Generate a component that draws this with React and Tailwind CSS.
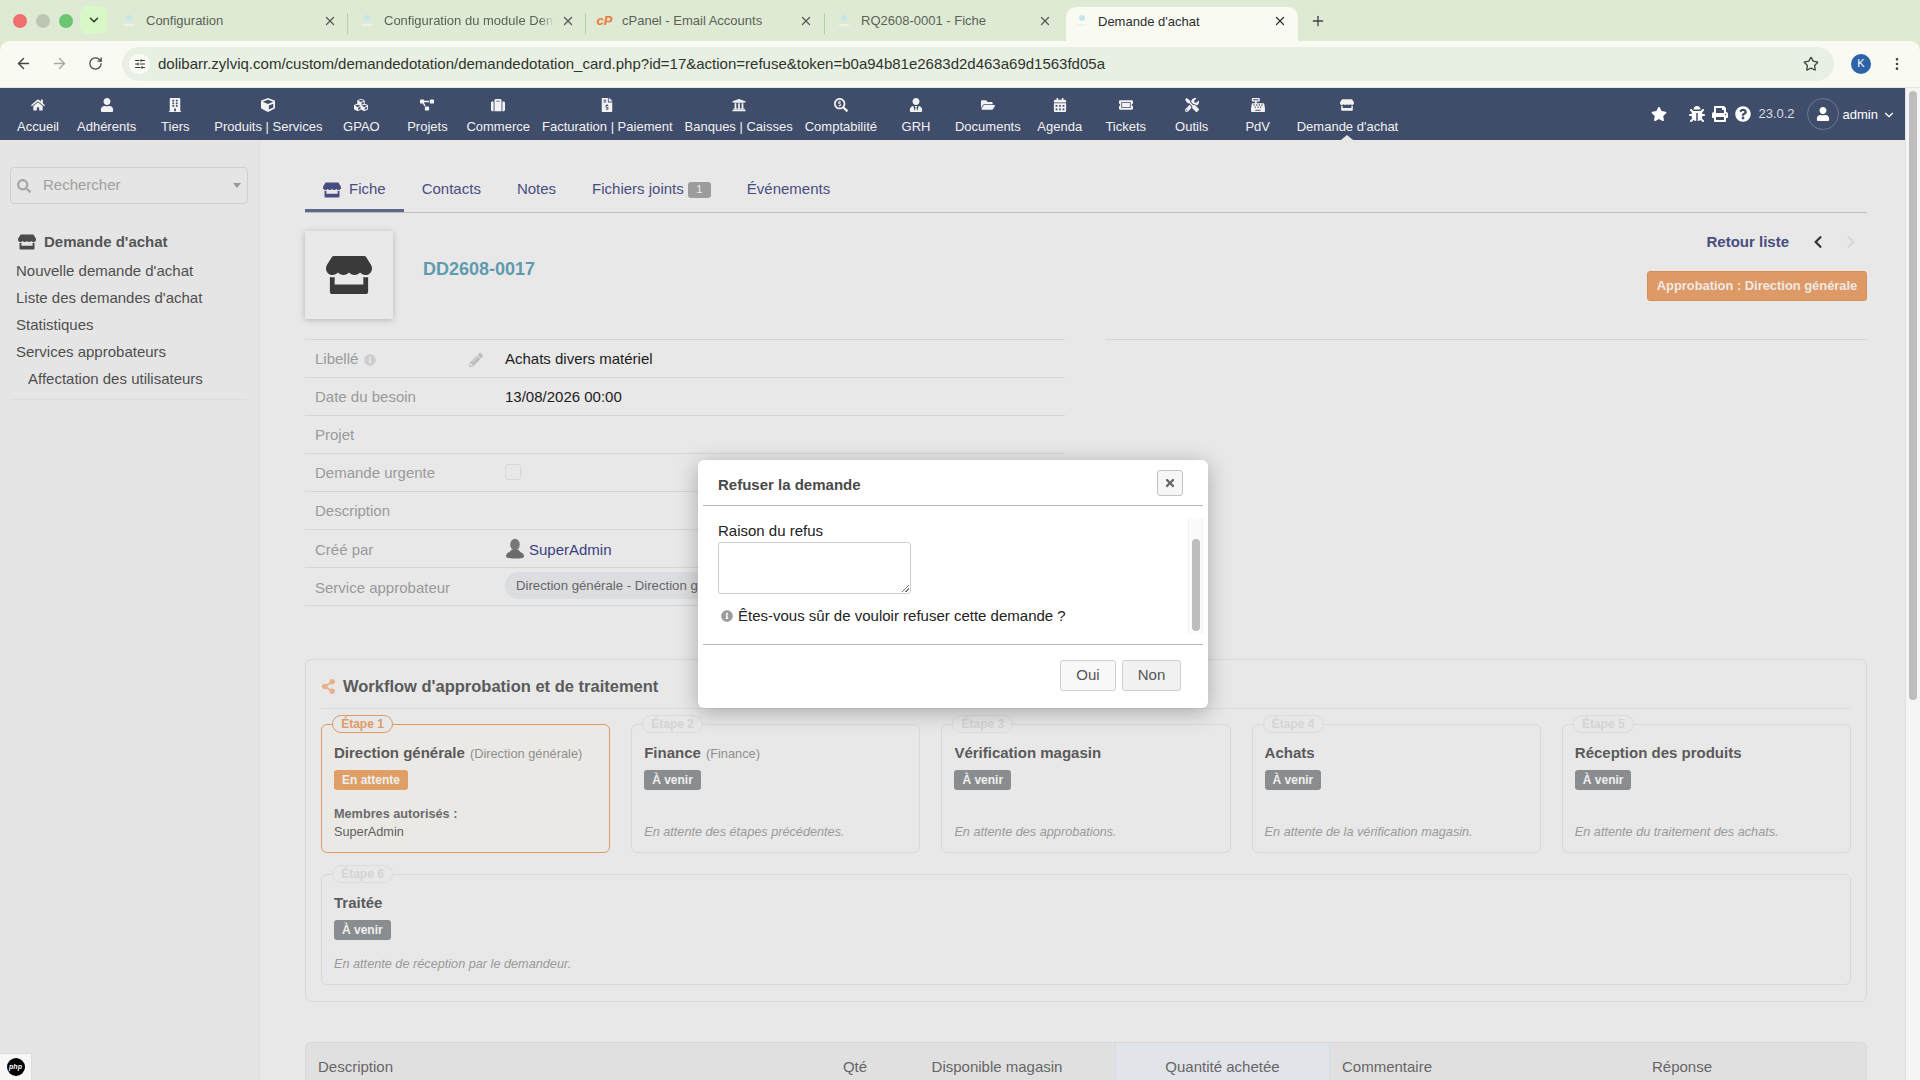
import React from 'react';
import { ArrowLeft, ArrowRight, RotateCw, Star, EllipsisVertical, ChevronDown, X, Plus, SlidersHorizontal } from 'lucide-react';
import {
  FaHome, FaUser, FaBuilding, FaCube, FaCubes, FaProjectDiagram, FaSuitcase, FaFileInvoiceDollar, FaUniversity,
  FaSearchDollar, FaUserTie, FaFolderOpen, FaCalendarAlt, FaTicketAlt, FaTools, FaCashRegister, FaStore, FaStar,
  FaBug, FaPrint, FaQuestionCircle, FaSearch, FaInfoCircle, FaPencilAlt, FaTimes, FaShareAlt, FaChevronLeft, FaChevronRight,
} from 'react-icons/fa';

const Favicon = () => (
  <svg width="12" height="14" viewBox="0 0 12 14" className="shrink-0">
    <circle cx="6" cy="4" r="3" fill="#c4e6e8" />
    <rect x="1" y="10" width="10" height="2" rx="1" fill="#eef3ea" />
  </svg>
);

const browserTabs = [
  { label: 'Configuration', width: 'w-[238px]', icon: <Favicon />, sep: true, fade: '' },
  { label: 'Configuration du module Dem', width: 'w-[238px]', icon: <Favicon />, sep: true, fade: '[mask-image:linear-gradient(90deg,#000_92%,transparent)]' },
  { label: 'cPanel - Email Accounts', width: 'w-[239px]', icon: <span className="text-[13px] leading-none font-bold italic text-[#e8793a]">cP</span>, sep: true, fade: '' },
  { label: 'RQ2608-0001 - Fiche', width: 'w-[241px]', icon: <Favicon />, sep: false, fade: '' },
];

const navItems = [
  ['Accueil', FaHome], ['Adhérents', FaUser], ['Tiers', FaBuilding], ['Produits | Services', FaCube], ['GPAO', FaCubes],
  ['Projets', FaProjectDiagram], ['Commerce', FaSuitcase], ['Facturation | Paiement', FaFileInvoiceDollar],
  ['Banques | Caisses', FaUniversity], ['Comptabilité', FaSearchDollar], ['GRH', FaUserTie], ['Documents', FaFolderOpen],
  ['Agenda', FaCalendarAlt], ['Tickets', FaTicketAlt], ['Outils', FaTools], ['PdV', FaCashRegister], ["Demande d'achat", FaStore],
];

const sideItems = [
  ["Nouvelle demande d'achat", 'pl-[16px]'],
  ["Liste des demandes d'achat", 'pl-[16px]'],
  ['Statistiques', 'pl-[16px]'],
  ['Services approbateurs', 'pl-[16px]'],
  ['Affectation des utilisateurs', 'pl-[28px]'],
];

const steps = [
  { n: 1, title: 'Direction générale', sub: '(Direction générale)', active: true },
  { n: 2, title: 'Finance', sub: '(Finance)', note: 'En attente des étapes précédentes.' },
  { n: 3, title: 'Vérification magasin', note: 'En attente des approbations.' },
  { n: 4, title: 'Achats', note: 'En attente de la vérification magasin.' },
  { n: 5, title: 'Réception des produits', note: 'En attente du traitement des achats.' },
];

function StepCard({ n, title, sub, note, active, className }) {
  return (
    <div className={`relative flex flex-col rounded-[6px] border px-[12px] pt-[18px] pb-[11px] ${active ? 'border-[#dd9a66] bg-[#eae9e5]' : 'border-[#d9d9d9]'} ${className}`}>
      <div className={`absolute left-[10px] top-[-10px] flex h-[18px] w-[61px] items-center justify-center rounded-full border bg-[#e8e8e8] text-[12px] font-bold ${active ? 'border-[#dd9a66] text-[#dd9a66]' : 'border-[#dcdcdc] text-[#d4d4d4]'}`}>
        Étape {n}
      </div>
      <div className="h-[20px] whitespace-nowrap text-[15px] leading-[20px] font-bold text-[#5a5a5a]">
        {title}
        {sub && <span className="ml-[5px] text-[12.8px] font-normal text-[#8f8f8f]">{sub}</span>}
      </div>
      <div className={`mt-[7px] flex h-[20px] w-fit items-center rounded-[3px] px-[8px] text-[12px] font-bold text-[#efefef] ${active ? 'bg-[#e09f67]' : 'bg-[#8a8d90]'}`}>
        {active ? 'En attente' : 'À venir'}
      </div>
      {active ? (
        <div className="mt-auto text-[12.7px] leading-[18px] text-[#5f5f5f]">
          <div className="font-bold text-[#6b6b6b]">Membres autorisés :</div>
          <div>SuperAdmin</div>
        </div>
      ) : (
        <div className="mt-auto text-[12.7px] leading-[18px] text-[#9a9a9a] italic">{note}</div>
      )}
    </div>
  );
}

function Row({ label, children, pad = 'pt-[2px]' }) {
  return (
    <div className={`flex h-[38px] items-center border-t border-[#d6d6d6] ${pad}`}>
      <div className="flex w-[200px] items-center pl-[10px] text-[15px] text-[#9a9a9a]">{label}</div>
      <div className="flex min-w-0 flex-1 items-center whitespace-nowrap text-[15px] text-[#1c1c1c]">{children}</div>
    </div>
  );
}

export default function App() {
  return (
    <div className="relative h-[1080px] w-[1920px] overflow-hidden bg-[#dfead5] font-['Liberation_Sans',Arial,sans-serif]">
      {/* tab strip */}
      <div className="flex h-[41px] items-start">
        <div className="flex h-[41px] w-[110px] items-center">
          <span className="ml-[13px] h-[14px] w-[14px] rounded-full bg-[#f07070]" />
          <span className="ml-[9px] h-[14px] w-[14px] rounded-full bg-[#bcc6b2]" />
          <span className="ml-[9px] h-[14px] w-[14px] rounded-full bg-[#6cc570]" />
          <span className="mb-[1px] ml-[7px] flex h-[28px] w-[27px] items-center justify-center rounded-[8px] bg-[#d9f8c8]">
            <ChevronDown size={14} strokeWidth={2.6} className="text-[#2c3a2c]" />
          </span>
        </div>
        {browserTabs.map((t) => (
          <div key={t.label} className={`relative flex h-[41px] items-center ${t.width}`}>
            <div className="flex w-[36px] justify-center pl-[1px]">{t.icon}</div>
            <div className={`w-[170px] pt-[1px] text-[13px] whitespace-nowrap text-[#5a6256] ${t.fade}`}>{t.label}</div>
            <X size={14} strokeWidth={2.2} className="ml-[7px] text-[#555]" />
            {t.sep && <span className="absolute top-[13px] right-0 h-[21px] w-[1px] bg-[#b6cfa8]" />}
          </div>
        ))}
        <div className="mt-[7px] flex h-[34px] w-[232px] items-center rounded-t-[10px] bg-[#f9fbf3] pb-[6px]">
          <div className="flex w-[32px] justify-center">
            <Favicon />
          </div>
          <div className="w-[175px] pt-[1px] text-[13px] whitespace-nowrap text-[#2d2d2d]">Demande d'achat</div>
          <X size={14} strokeWidth={2.2} className="text-[#333]" />
        </div>
        <Plus size={16} className="mt-[13px] ml-[12px] text-[#444]" />
      </div>

      {/* toolbar */}
      <div className="flex h-[47px] items-center rounded-t-[10px] border-b border-[#e6e9e0] bg-[#f9fbf3] pb-[1px]">
        <ArrowLeft size={17} className="ml-[15px] text-[#444]" />
        <ArrowRight size={17} className="ml-[19px] text-[#a4a8a0]" />
        <RotateCw size={15} className="ml-[20px] text-[#444]" />
        <div className="ml-[19px] flex h-[34px] w-[1712px] items-center rounded-full bg-[#e8efe3]">
          <span className="ml-[7px] flex h-[20px] w-[21px] items-center justify-center rounded-full bg-[#fdfdf8]">
            <SlidersHorizontal size={12} className="text-[#333]" />
          </span>
          <span className="ml-[8px] pt-[1px] text-[15px] whitespace-nowrap text-[#2e352c]">
            dolibarr.zylviq.com/custom/demandedotation/demandedotation_card.php?id=17&amp;action=refuse&amp;token=b0a94b81e2683d2d463a69d1563fd05a
          </span>
          <Star size={16} className="mr-[15px] ml-auto text-[#444]" />
        </div>
        <span className="ml-[17px] flex h-[20px] w-[20px] items-center justify-center rounded-full bg-[#2b62a8] text-[11px] text-white">K</span>
        <EllipsisVertical size={16} className="ml-[18px] text-[#444]" />
      </div>

      <div className="flex h-[992px] bg-[#e8e8e8]">
        <div className="flex w-[1905px] flex-col">
          {/* app nav */}
          <div className="relative flex h-[52px] shrink-0 items-start bg-[#3f4d6b] pl-[5px] text-[#f2f2f2]">
            {navItems.map(([label, Icon]) => (
              <div key={label} className="relative flex h-[52px] min-w-[66px] flex-col items-center px-[6px] pt-[10px]">
                <Icon size={14} className="text-[#f2f2f2]" />
                <div className="mt-[7px] text-[13px] leading-[16px] whitespace-nowrap">{label}</div>
                {label === "Demande d'achat" && (
                  <span className="absolute bottom-0 left-1/2 h-0 w-0 -translate-x-1/2 border-x-[6px] border-b-[5px] border-x-transparent border-b-[#e8e8e8]" />
                )}
              </div>
            ))}
            <div className="ml-auto flex h-[52px] items-center pr-[9px]">
              <FaStar size={16} className="text-white" />
              <FaBug size={16} className="ml-[22px] text-white" />
              <FaPrint size={16} className="ml-[7px] text-white" />
              <FaQuestionCircle size={16} className="ml-[7px] text-white" />
              <span className="ml-[7px] text-[13px] text-[#d8dbe2]">23.0.2</span>
              <span className="ml-[12px] flex h-[32px] w-[32px] items-center justify-center rounded-full border border-[#6c7890]">
                <FaUser size={14} className="text-white" />
              </span>
              <span className="ml-[4px] pt-[2px] text-[13px] text-white">admin</span>
              <ChevronDown size={14} className="mt-[2px] ml-[4px] text-white" />
            </div>
          </div>

          <div className="flex min-h-0 flex-1">
            {/* sidebar */}
            <div className="w-[260px] shrink-0 border-r border-[#dedede] bg-[#e5e5e5] pt-[27px]">
              <div className="mx-[10px] flex h-[37px] w-[238px] items-center rounded-[4px] border border-[#d0d0d0]">
                <FaSearch size={14} className="ml-[6px] text-[#a8a8a8]" />
                <span className="ml-[12px] text-[15px] text-[#a0a0a0]">Rechercher</span>
                <span className="mr-[6px] ml-auto h-0 w-0 border-x-[4px] border-t-[5px] border-x-transparent border-t-[#999]" />
              </div>
              <div className="mt-[24px] mb-[2px] flex h-[28px] items-center pl-[18px] text-[15px] font-bold text-[#555]">
                <FaStore size={18} className="text-[#4a4a4a]" />
                <span className="ml-[8px]">Demande d'achat</span>
              </div>
              {sideItems.map(([label, pl]) => (
                <div key={label} className={`flex h-[27px] items-center text-[15px] text-[#4f4f4f] ${pl}`}>{label}</div>
              ))}
              <div className="mx-[10px] mt-[6px] w-[237px] border-t border-[#dcdcdc]" />
            </div>

            {/* main */}
            <div className="min-w-0 flex-1 pr-[38px] pl-[45px]">
              <div className="flex h-[73px] items-end border-b border-[#bdbdbd] text-[15px] text-[#484d80]">
                <div className="flex h-[48px] items-center gap-[8px] border-b-[3px] border-[#5c6a87] px-[18px] pt-[6px]">
                  <FaStore size={18} />
                  <span>Fiche</span>
                </div>
                <div className="flex h-[48px] items-center px-[18px] pt-[3px]">Contacts</div>
                <div className="flex h-[48px] items-center px-[18px] pt-[3px]">Notes</div>
                <div className="flex h-[48px] items-center px-[18px] pt-[3px]">
                  Fichiers joints
                  <span className="ml-[4px] flex h-[16px] w-[23px] items-center justify-center rounded-[3px] bg-[#9c9c9c] text-[11px] text-[#eee]">1</span>
                </div>
                <div className="flex h-[48px] items-center px-[18px] pt-[3px]">Événements</div>
              </div>

              <div className="flex h-[126px] justify-between pt-[18px]">
                <div className="flex items-start">
                  <div className="flex h-[88px] w-[88px] items-center justify-center bg-[#e9e9e9] shadow-[0_1px_6px_rgba(0,0,0,0.22)]">
                    <FaStore size={46} className="text-[#3a3a3a]" />
                  </div>
                  <div className="mt-[28px] ml-[30px] text-[18px] leading-[20px] font-bold text-[#5f9bad]">DD2608-0017</div>
                </div>
                <div className="flex flex-col items-end">
                  <div className="flex h-[20px] items-center pt-[2px]">
                    <span className="text-[15px] font-bold text-[#484d80]">Retour liste</span>
                    <FaChevronLeft size={14} className="ml-[22px] text-[#333]" />
                    <FaChevronRight size={14} className="mr-[9px] ml-[19px] text-[#d8d8d8]" />
                  </div>
                  <div className="mt-[20px] flex h-[30px] w-[220px] items-center justify-center rounded-[3px] border border-[#d59058] bg-[#dd9a66] text-[12.9px] font-bold text-[#efe9e3]">
                    Approbation : Direction générale
                  </div>
                </div>
              </div>

              <div className="flex gap-[41px]">
                <div className="w-[760px] border-b border-[#d6d6d6]">
                  <Row label={<><span>Libellé</span><FaInfoCircle size={12} className="ml-[6px] text-[#cdcdcd]" /><FaPencilAlt size={14} className="ml-[93px] text-[#bdbdbd]" /></>}>
                    Achats divers matériel
                  </Row>
                  <Row label="Date du besoin">13/08/2026 00:00</Row>
                  <Row label="Projet" />
                  <Row label="Demande urgente">
                    <span className="mb-[4px] h-[16px] w-[16px] rounded-[3px] border border-[#d8d8d8]" />
                  </Row>
                  <Row label="Description" />
                  <Row label="Créé par" pad="pt-[3px]">
                    <svg width="20" height="21" viewBox="0 0 20 21" className="mb-[3px]">
                      <ellipse cx="10" cy="6.5" rx="4.8" ry="5.8" fill="#787878" />
                      <path d="M6.5 11.5 C6.5 14 1 14.5 1 18 C1 20 3 20.5 10 20.5 C17 20.5 19 20 19 18 C19 14.5 13.5 14 13.5 11.5 Z" fill="#6c6c6c" />
                    </svg>
                    <span className="ml-[4px] text-[#3c3f7f]">SuperAdmin</span>
                  </Row>
                  <Row label="Service approbateur" pad="pt-[3px]">
                    <span className="-mt-[5px] flex h-[27px] items-center rounded-full bg-[#dcdde0] px-[11px] text-[13.2px] text-[#666]">
                      Direction générale - Direction générale
                    </span>
                  </Row>
                </div>
                <div className="flex-1 border-t border-[#d6d6d6]" />
              </div>

              {/* workflow */}
              <div className="mt-[53px] rounded-[6px] border border-[#d8d8d8] px-[15px] pb-[16px]">
                <div className="flex h-[49px] items-center border-b border-[#dcdcdc] pt-[4px]">
                  <FaShareAlt size={15} className="text-[#e8b088]" />
                  <span className="ml-[7px] text-[16.5px] font-bold text-[#5a5a5a]">Workflow d'approbation et de traitement</span>
                </div>
                <div className="mt-[15px] grid grid-cols-5 gap-[21px]">
                  {steps.map((s) => (
                    <StepCard key={s.n} {...s} className="h-[129px]" />
                  ))}
                  <StepCard n={6} title="Traitée" note="En attente de réception par le demandeur." className="col-span-5 h-[111px]" />
                </div>
              </div>

              {/* lines table */}
              <div className="mt-[40px] flex h-[60px] rounded-t-[6px] border-t border-x border-[#d8d8d8] bg-[#e0e0e0] text-[15px] text-[#666]">
                <div className="w-[519px] pt-[13px] pl-[12px]">Description</div>
                <div className="w-[60px] pt-[13px] text-center">Qté</div>
                <div className="w-[230px] pt-[13px] pr-[6px] text-center">Disponible magasin</div>
                <div className="w-[215px] border-x border-[#d2dbe8] bg-[#e1e4e8] pt-[13px] text-center">Quantité achetée</div>
                <div className="w-[322px] pt-[13px] pl-[12px]">Commentaire</div>
                <div className="pt-[13px]">Réponse</div>
              </div>
            </div>
          </div>
        </div>

        {/* page scrollbar */}
        <div className="w-[15px] border-l border-[#e2e2e2] bg-[#f5f5f5] pt-[3px] pl-[3px]">
          <div className="h-[609px] w-[8px] rounded-full bg-[#bdbdbd]" />
        </div>
      </div>

      {/* php badge */}
      <div className="absolute bottom-0 left-0 flex h-[27px] w-[32px] items-center justify-center border-t border-r border-[#ddd] bg-[#f7f7f7]">
        <span className="flex h-[18px] w-[18px] items-center justify-center rounded-full bg-black text-[7px] font-bold text-white italic">php</span>
      </div>

      {/* dialog */}
      <div className="absolute top-[460px] left-[698px] flex h-[248px] w-[510px] flex-col rounded-[6px] bg-white px-[5px] shadow-[0_4px_22px_rgba(0,0,0,0.28)]">
        <div className="flex h-[46px] shrink-0 items-center justify-between border-b border-[#b5b5b5] pr-[20px] pl-[15px]">
          <span className="mt-[6px] text-[15px] font-bold text-[#4a4a4a]">Refuser la demande</span>
          <span className="flex h-[26px] w-[26px] items-center justify-center rounded-[3px] border border-[#c4c4c4] bg-[#f6f6f6]">
            <FaTimes size={12} className="text-[#666]" />
          </span>
        </div>
        <div className="flex h-[139px] shrink-0 border-b border-[#b5b5b5] pt-[16px]">
          <div className="min-w-0 flex-1 pl-[15px]">
            <div className="text-[15px] leading-[17px] text-[#222]">Raison du refus</div>
            <div className="relative mt-[3px] h-[52px] w-[193px] rounded-[3px] border border-[#cfcfcf]">
              <span className="absolute right-[1px] bottom-[1px] h-[7px] w-[7px] bg-[linear-gradient(135deg,transparent_45%,#777_45%,#777_55%,transparent_55%,transparent_70%,#777_70%,#777_80%,transparent_80%)]" />
            </div>
            <div className="mt-[13px] flex items-center text-[15px] leading-[17px] text-[#222]">
              <FaInfoCircle size={12} className="ml-[3px] text-[#9c9c9c]" />
              <span className="ml-[5px]">Êtes-vous sûr de vouloir refuser cette demande ?</span>
            </div>
          </div>
          <div className="-mt-[4px] h-[116px] w-[15px] border-x border-[#f2f2f2] bg-[#fbfbfb] pt-[21px] pl-[3px]">
            <div className="h-[92px] w-[8px] rounded-full bg-[#bdbdbd]" />
          </div>
        </div>
        <div className="flex flex-1 justify-end gap-[6px] pt-[15px] pr-[22px] text-[15px] text-[#555]">
          <div className="flex h-[31px] w-[56px] items-center justify-center rounded-[3px] border border-[#cfcfcf] bg-[#f8f8f8]">Oui</div>
          <div className="flex h-[31px] w-[59px] items-center justify-center rounded-[3px] border border-[#cfcfcf] bg-[#f1f1f1]">Non</div>
        </div>
      </div>
    </div>
  );
}
